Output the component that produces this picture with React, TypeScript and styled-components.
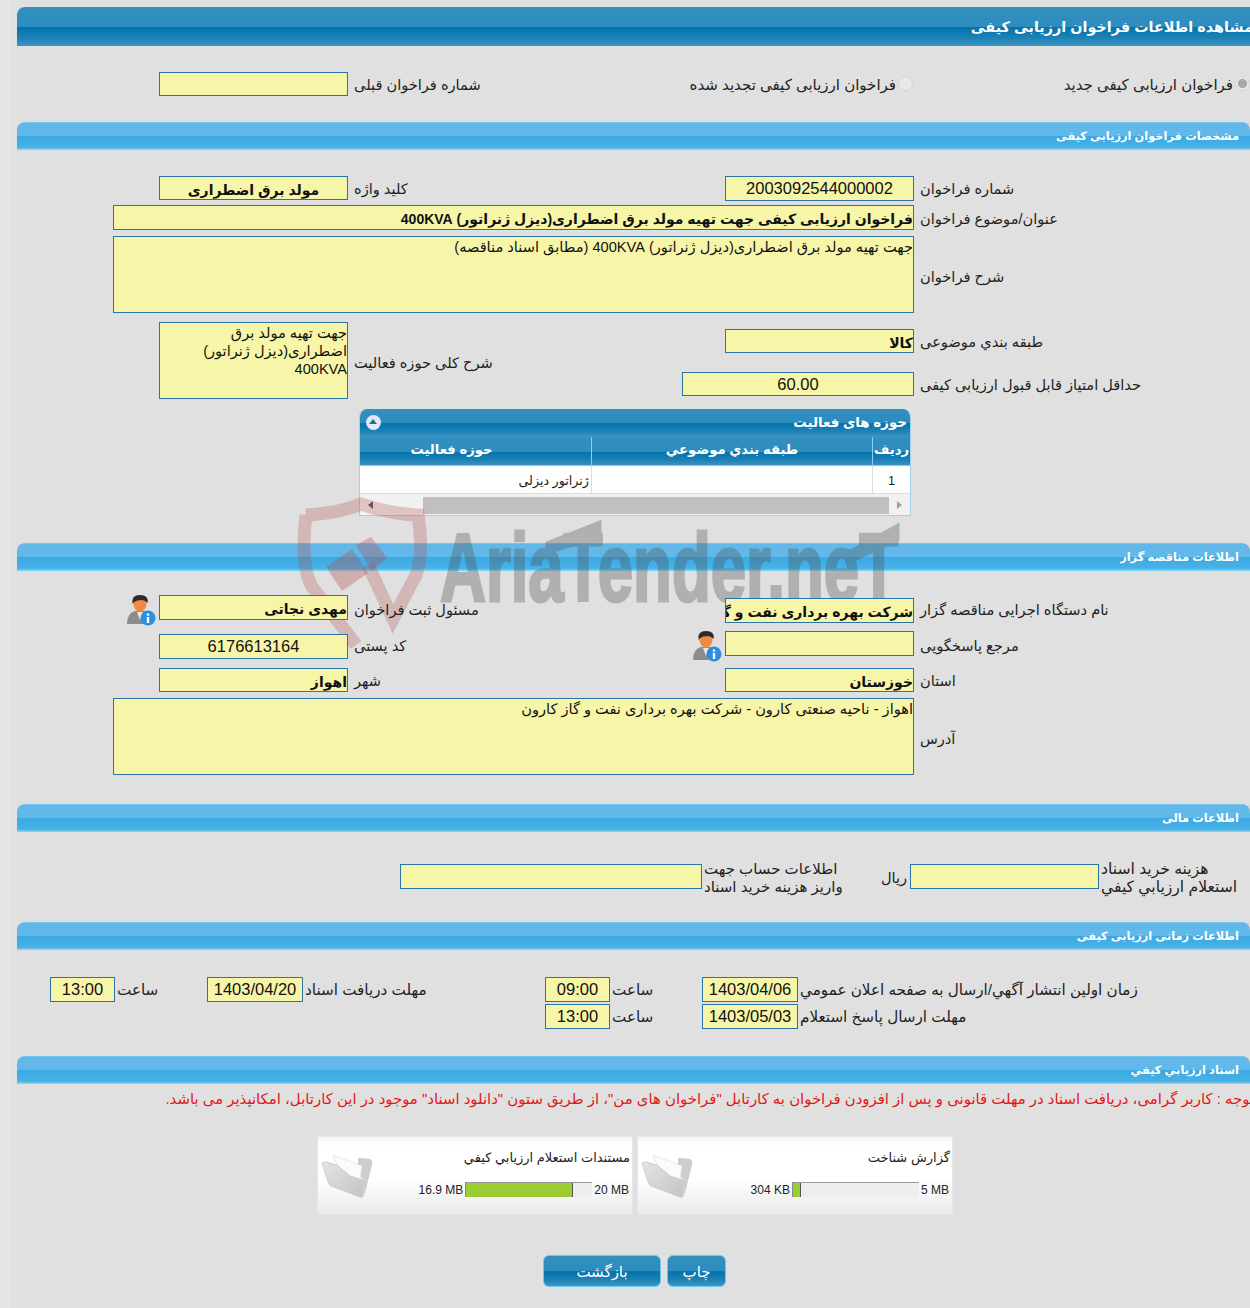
import React, { FC, ReactNode } from "react";
import styled, { createGlobalStyle, css } from "styled-components";

const GlobalStyle = createGlobalStyle`
  html, body {
    margin: 0;
    padding: 0;
    background: #e0e0e0;
  }
`;

const darkBar = css`
  background: linear-gradient(
    to bottom,
    #338fc0 0%,
    #2d8dbe 50%,
    #0273ae 52%,
    #1e82b5 80%,
    #3d97c6 100%
  );
`;

const lightBar = css`
  background: linear-gradient(
    to bottom,
    #7ccdf2 0,
    #62b9e9 5%,
    #62b9e9 48%,
    #3aa9e3 52%,
    #4ab2e6 92%,
    #7dd0f2 96%
  );
`;

const Page = styled.div`
  position: relative;
  width: 1250px;
  height: 1308px;
  overflow: hidden;
  box-sizing: border-box;
  padding-top: 7px;
  background: linear-gradient(to right, #e6e6e6 0, #e6e6e6 10px, #e0e0e0 11px);
  font-family: "Liberation Sans", "DejaVu Sans", sans-serif;
  font-size: 14.6px;
  color: #222;
`;

const MainHeader = styled.div`
  ${darkBar}
  height: 39px;
  margin-left: 17px;
  border-top-left-radius: 8px;
  overflow: hidden;
  display: flex;
  align-items: center;
  color: #fff;
  font-weight: bold;
  font-size: 14.4px;
  white-space: nowrap;
  box-sizing: border-box;
`;

const MainTitle = styled.span`
  flex: none;
  margin-right: -3px;
`;

const SectionBar = styled.div<{ $top: number }>`
  ${lightBar}
  height: 28px;
  margin: ${(p) => p.$top}px 0 0 17px;
  border-radius: 8px 8px 0 0;
  display: flex;
  align-items: center;
  padding-right: 11px;
  color: #fff;
  font-weight: bold;
  font-size: 11.4px;
  white-space: nowrap;
`;

const Row = styled.div<{ $top: number; $height: number }>`
  display: flex;
  margin-top: ${(p) => p.$top}px;
  height: ${(p) => p.$height}px;
`;

const Slot = styled.div<{ $width: number }>`
  width: ${(p) => p.$width}px;
  flex: none;
  display: flex;
  justify-content: flex-end;
  align-items: flex-start;
`;

const Field = styled.div<{
  $width: number;
  $height?: number;
  $center?: boolean;
  $bold?: boolean;
  $big?: boolean;
  $drop?: number;
}>`
  position: relative;
  z-index: 2;
  box-sizing: border-box;
  flex: none;
  width: ${(p) => p.$width}px;
  height: ${(p) => p.$height ?? 25}px;
  margin-top: ${(p) => p.$drop ?? 0}px;
  border: 1px solid #2a75a8;
  background: #f7f6a8;
  overflow: hidden;
  color: #111;
  text-align: ${(p) => (p.$center ? "center" : "right")};
  white-space: ${(p) => (p.$height && p.$height > 30 ? "normal" : "nowrap")};
  font-weight: ${(p) => (p.$bold ? "bold" : "normal")};
  font-size: ${(p) => (p.$big ? 16.5 : p.$bold ? 14 : 14.6)}px;
  line-height: ${(p) =>
    p.$height && p.$height > 30 ? "18px" : p.$big ? "23px" : "26px"};
  padding-top: ${(p) => (p.$height && p.$height > 30 ? 1 : 0)}px;
`;

const Label = styled.div<{ $width?: number; $pad?: number; $nudge?: number; $size?: number }>`
  position: relative;
  z-index: 2;
  flex: none;
  box-sizing: border-box;
  align-self: center;
  width: ${(p) => (p.$width ? `${p.$width}px` : "auto")};
  padding-left: ${(p) => p.$pad ?? 6}px;
  padding-top: ${(p) => p.$nudge ?? 2}px;
  font-size: ${(p) => p.$size ?? 14.6}px;
  text-align: left;
  white-space: nowrap;
  line-height: 18px;
`;

const RadioSlot = styled.div<{ $width: number }>`
  display: flex;
  justify-content: flex-end;
  flex: none;
  width: ${(p) => p.$width}px;
`;

const RadioItem = styled.label`
  display: flex;
  align-items: flex-start;
  flex: none;
  font-size: 15px;
  line-height: 26px;
  white-space: nowrap;
`;

const Radio = styled.span<{ $checked?: boolean }>`
  box-sizing: border-box;
  display: block;
  flex: none;
  width: 15px;
  height: 15px;
  margin: 4px 0 0 2px;
  border-radius: 50%;
  border: 1px solid #d4d4d4;
  background: ${(p) =>
    p.$checked
      ? "radial-gradient(circle, #a8a8a8 0, #a8a8a8 45%, #e8e8e8 55%)"
      : "#e8e8e8"};
`;

const StackColumn = styled.div`
  flex: none;
  width: 572px;
  display: flex;
  flex-direction: column;
  padding-top: 7px;
  gap: 19px;
`;

const StackLine = styled.div`
  display: flex;
`;

const IconRow = styled.div`
  display: flex;
  align-items: flex-start;
  flex: none;
  gap: 3px;
`;

const PersonFrame = styled.span`
  display: block;
  flex: none;
  margin-top: -1px;
  width: 30px;
  height: 32px;
`;

const Panel = styled.div`
  box-sizing: border-box;
  width: 552px;
  height: 107px;
  margin: 10px 0 0 359px;
  border: 1px solid #9fd0ec;
  border-top: 0;
  border-radius: 8px 8px 0 0;
  overflow: hidden;
  background: #fff;
`;

const PanelTitle = styled.div`
  ${darkBar}
  height: 28px;
  display: flex;
  align-items: center;
  justify-content: space-between;
  box-sizing: border-box;
  padding: 0 3px 2px 6px;
  color: #fff;
  font-weight: bold;
  font-size: 13.4px;
`;

const CollapseButton = styled.span`
  display: block;
  width: 15px;
  height: 15px;
  border-radius: 50%;
  background: #dfe9f7;
  position: relative;
  &::after {
    content: "";
    position: absolute;
    left: 3px;
    top: 4px;
    border: 4.5px solid transparent;
    border-top: 0;
    border-bottom: 5px solid #1b6f9f;
  }
`;

const GridRow = styled.div<{ $head?: boolean }>`
  display: grid;
  grid-template-columns: 231px 281px 1fr;
  height: ${(p) => (p.$head ? 29 : 28)}px;
  ${(p) => (p.$head ? darkBar : "background: #fff;")}
  color: ${(p) => (p.$head ? "#fff" : "#222")};
  font-weight: ${(p) => (p.$head ? "bold" : "normal")};
  font-size: ${(p) => (p.$head ? 13.2 : 12.7)}px;
`;

const GridCell = styled.div<{ $head?: boolean; $align?: string; $endPad?: number }>`
  border-left: 1px solid ${(p) => (p.$head ? "#8ad0f0" : "#dcdcdc")};
  border-bottom: 1px solid ${(p) => (p.$head ? "#7ac8ee" : "#dcdcdc")};
  &:first-child {
    border-left: 0;
  }
  display: flex;
  align-items: center;
  justify-content: ${(p) => p.$align ?? "center"};
  padding: ${(p) => (p.$head ? "0 0 3px" : "2px 0 0")};
  padding-right: ${(p) => p.$endPad ?? 2}px;
  padding-left: 2px;
  white-space: nowrap;
  overflow: hidden;
  box-sizing: border-box;
`;

const ScrollBar = styled.div`
  height: 21px;
  background: #f1f1f1;
  display: flex;
  align-items: center;
  padding-top: 1px;
  box-sizing: border-box;
`;

const ScrollArrow = styled.span<{ $dir: "left" | "right" }>`
  flex: none;
  width: 0;
  height: 0;
  margin: ${(p) => (p.$dir === "left" ? "0 50px 0 8px" : "0 0 0 8px")};
  border: 4px solid transparent;
  ${(p) =>
    p.$dir === "left"
      ? "border-left: 0; border-right: 5px solid #555;"
      : "border-right: 0; border-left: 5px solid #a0a0a0;"}
`;

const ScrollThumb = styled.span`
  flex: none;
  width: 466px;
  height: 17px;
  background: #c0c0c0;
`;

const Notice = styled.div`
  margin-top: 6px;
  height: 18px;
  line-height: 18px;
  display: flex;
  color: #e01818;
  font-size: 14.9px;
  white-space: nowrap;
`;

const NoticeText = styled.span`
  flex: none;
  margin-right: -4px;
`;

const Cards = styled.div`
  display: flex;
  gap: 4px;
  margin: 28px 0 0 317px;
`;

const Card = styled.div`
  box-sizing: border-box;
  width: 316px;
  height: 79px;
  background: linear-gradient(to bottom, #f6f6f6 0, #fff 12%, #fff 55%, #e9e9e9 100%);
  border: 1px solid #e6e6e6;
  display: flex;
  padding: 0 2px;
`;

const FolderFrame = styled.span`
  display: block;
  flex: none;
  margin-top: 16px;
  width: 54px;
  height: 48px;
`;

const CardBody = styled.div`
  flex: 1;
  display: flex;
  flex-direction: column;
  align-items: flex-end;
`;

const CardTitle = styled.div`
  margin-top: 12px;
  font-size: 13px;
  line-height: 18px;
  color: #222;
  white-space: nowrap;
`;

const Meter = styled.div`
  display: flex;
  align-items: center;
  margin-top: 15px;
  gap: 2px;
  font-size: 12px;
  color: #222;
  padding-right: 1px;
`;

const MeterTrack = styled.div`
  position: relative;
  width: 127px;
  height: 15px;
  box-sizing: border-box;
  background: #eeeeee;
  border-top: 1px solid #999;
`;

const MeterFill = styled.div<{ $width: number }>`
  height: 100%;
  box-sizing: border-box;
  width: ${(p) => p.$width}px;
  background: #9bcc32;
  border-left: 1px solid #888;
  border-right: 1px solid #555;
`;

const Buttons = styled.div`
  display: flex;
  gap: 6px;
  margin: 40px 0 0 543px;
`;

const ActionButton = styled.button<{ $width: number }>`
  ${darkBar}
  width: ${(p) => p.$width}px;
  height: 32px;
  box-sizing: border-box;
  border: 1px solid #6cc8ec;
  border-radius: 6px;
  color: #fff;
  font-family: inherit;
  font-size: 15px;
  padding: 1px 0 0;
`;

const WatermarkLayer = styled.svg`
  position: absolute;
  left: 290px;
  top: 495px;
  z-index: 1;
  pointer-events: none;
`;

const Watermark: FC = () => (
  <WatermarkLayer width="620" height="175" viewBox="0 0 620 175">
    <g fill="none" stroke="#b44a4a" strokeWidth="13" opacity="0.27">
      <path d="M16 20 Q50 18 71 9 Q100 19 128 20 Q134 60 126 80 L103 124 L78 70" />
      <path d="M16 20 Q10 70 22 92 L66 150" />
    </g>
    <g fill="#b44a4a" opacity="0.33">
      <polygon points="36,72 62,54 78,78 52,96" />
      <polygon points="66,50 81,42 97,63 82,76" />
    </g>
    <g fill="#505050" stroke="#505050" strokeWidth="3" opacity="0.33">
      <text
        x="150"
        y="106"
        fontFamily="Liberation Sans, sans-serif"
        fontWeight="bold"
        fontSize="96"
        textLength="458"
        lengthAdjust="spacingAndGlyphs"
      >
        AriaTender.neT
      </text>
      <polygon points="257,48 310,27 310,42 257,58" />
      <polygon points="557,58 608,30 608,45 557,68" />
    </g>
  </WatermarkLayer>
);

const PersonIcon: FC = () => (
  <PersonFrame>
    <svg width="30" height="32" viewBox="0 0 30 32">
      <path d="M1 30 Q1 19 9 17 L19 17 Q26 19 26 30 Z" fill="#8c8c8c" />
      <path d="M11 18 L14 26 L17 18 Z" fill="#e8e8e8" />
      <ellipse cx="14" cy="10" rx="6.5" ry="7.5" fill="#f08a3c" />
      <path d="M6.5 10 Q5 1 14 1 Q23 1 21.5 9 Q18 4.5 12 6.5 Q9 6.5 6.5 10 Z" fill="#2b2b2b" />
      <circle cx="22" cy="24" r="7.5" fill="#2a8fe0" />
      <rect x="20.8" y="23" width="2.4" height="6" fill="#fff" />
      <rect x="20.8" y="19.5" width="2.4" height="2.2" fill="#fff" />
    </svg>
  </PersonFrame>
);

const FolderIcon: FC<{ id: string }> = ({ id }) => (
  <FolderFrame>
    <svg width="54" height="48" viewBox="0 0 54 48">
      <defs>
        <linearGradient id={id} x1="0" y1="0" x2="1" y2="1">
          <stop offset="0" stopColor="#e4e4e4" />
          <stop offset="1" stopColor="#c4c4c4" />
        </linearGradient>
      </defs>
      <path d="M38 5 Q44 5 50 6 Q53 7 52 12 L44 44 L43 27 L38 20 Z" fill="#cdcdcd" />
      <path d="M13 2 L42 13 L40 27 L30 23 L17 12 Z" fill="#fbfbfb" stroke="#dcdcdc" strokeWidth="0.7" />
      <path
        d="M2 10 Q3 9 6 9 L17 12 Q24 18 30 23 L43 27 L43 43 Q43 45 40 44 L11 33 Q9 32 8 29 Z"
        fill={`url(#${id})`}
        stroke="#c8c8c8"
        strokeWidth="0.8"
      />
    </svg>
  </FolderFrame>
);

interface FileCardProps {
  id: string;
  title: string;
  used: string;
  limit: string;
  fill: number;
}

const FileCard: FC<FileCardProps> = ({ id, title, used, limit, fill }) => (
  <Card>
    <FolderIcon id={id} />
    <CardBody>
      <CardTitle dir="rtl">{title}</CardTitle>
      <Meter>
        <span>{used}</span>
        <MeterTrack>
          <MeterFill $width={fill} />
        </MeterTrack>
        <span>{limit}</span>
      </Meter>
    </CardBody>
  </Card>
);

interface TextProps {
  children: ReactNode;
}

const Rtl: FC<TextProps> = ({ children }) => <span dir="rtl">{children}</span>;

const App: FC = () => (
  <Page>
    <GlobalStyle />
    <Watermark />
    <MainHeader dir="rtl">
      <MainTitle>مشاهده اطلاعات فراخوان ارزیابی کیفی</MainTitle>
    </MainHeader>

    <Row $top={26} $height={24}>
      <Slot $width={348}>
        <Field $width={189} $height={24} />
      </Slot>
      <Label $width={340}><Rtl>شماره فراخوان قبلی</Rtl></Label>
      <RadioSlot $width={225}>
        <RadioItem>
          <Rtl>فراخوان ارزیابی کیفی تجدید شده</Rtl>
          <Radio />
        </RadioItem>
      </RadioSlot>
      <RadioSlot $width={337}>
        <RadioItem>
          <Rtl>فراخوان ارزیابی کیفی جدید</Rtl>
          <Radio $checked />
        </RadioItem>
      </RadioSlot>
    </Row>

    <SectionBar $top={26} dir="rtl">مشخصات فراخوان ارزیابی کیفی</SectionBar>

    <Row $top={26} $height={24}>
      <Slot $width={348}>
        <Field $width={189} $height={24} $center $bold>مولد برق اضطراری</Field>
      </Slot>
      <Label $width={377}><Rtl>کلید واژه</Rtl></Label>
      <Field $width={189} $center $big>2003092544000002</Field>
      <Label $nudge={1}><Rtl>شماره فراخوان</Rtl></Label>
    </Row>
    <Row $top={5} $height={25}>
      <Slot $width={914}>
        <Field $width={801} $bold dir="rtl">فراخوان ارزیابی کیفی جهت تهیه مولد برق اضطراری(دیزل ژنراتور) 400KVA</Field>
      </Slot>
      <Label $nudge={3}><Rtl>عنوان/موضوع فراخوان</Rtl></Label>
    </Row>
    <Row $top={6} $height={77}>
      <Slot $width={914}>
        <Field $width={801} $height={77} dir="rtl">جهت تهیه مولد برق اضطراری(دیزل ژنراتور) 400KVA (مطابق اسناد مناقصه)</Field>
      </Slot>
      <Label $nudge={5}><Rtl>شرح فراخوان</Rtl></Label>
    </Row>
    <Row $top={9} $height={77}>
      <Slot $width={348}>
        <Field $width={189} $height={77} dir="rtl">جهت تهیه مولد برق اضطراری(دیزل ژنراتور) 400KVA</Field>
      </Slot>
      <Label $width={334} $nudge={5}><Rtl>شرح کلی حوزه فعالیت</Rtl></Label>
      <StackColumn>
        <StackLine>
          <Slot $width={232}>
            <Field $width={189} $height={24} $bold dir="rtl">کالا</Field>
          </Slot>
          <Label><Rtl>طبقه بندي موضوعی</Rtl></Label>
        </StackLine>
        <StackLine>
          <Slot $width={232}>
            <Field $width={232} $height={24} $center $big>60.00</Field>
          </Slot>
          <Label><Rtl>حداقل امتیاز قابل قبول ارزیابی کیفی</Rtl></Label>
        </StackLine>
      </StackColumn>
    </Row>

    <Panel>
      <PanelTitle>
        <CollapseButton />
        <Rtl>حوزه های فعالیت</Rtl>
      </PanelTitle>
      <GridRow $head>
        <GridCell $head $endPad={50}>حوزه فعالیت</GridCell>
        <GridCell $head>طبقه بندي موضوعي</GridCell>
        <GridCell $head>ردیف</GridCell>
      </GridRow>
      <GridRow>
        <GridCell $align="flex-end">ژنراتور دیزلی</GridCell>
        <GridCell />
        <GridCell>1</GridCell>
      </GridRow>
      <ScrollBar>
        <ScrollArrow $dir="left" />
        <ScrollThumb />
        <ScrollArrow $dir="right" />
      </ScrollBar>
    </Panel>

    <SectionBar $top={27} dir="rtl">اطلاعات مناقصه گزار</SectionBar>

    <Row $top={24} $height={28}>
      <Slot $width={348}>
        <IconRow>
          <PersonIcon />
          <Field $width={189} $bold dir="rtl">مهدی نجاتی</Field>
        </IconRow>
      </Slot>
      <Label $width={377}><Rtl>مسئول ثبت فراخوان</Rtl></Label>
      <Field $width={189} $drop={3} $bold dir="rtl">شرکت بهره برداری نفت و گاز کارون</Field>
      <Label><Rtl>نام دستگاه اجرایی مناقصه گزار</Rtl></Label>
    </Row>
    <Row $top={8} $height={28}>
      <Slot $width={348}>
        <Field $width={189} $drop={3} $center $big>6176613164</Field>
      </Slot>
      <Label $width={344}><Rtl>کد پستی</Rtl></Label>
      <IconRow>
        <PersonIcon />
        <Field $width={189} />
      </IconRow>
      <Label><Rtl>مرجع پاسخگویی</Rtl></Label>
    </Row>
    <Row $top={9} $height={24}>
      <Slot $width={348}>
        <Field $width={189} $height={24} $bold dir="rtl">اهواز</Field>
      </Slot>
      <Label $width={377}><Rtl>شهر</Rtl></Label>
      <Field $width={189} $height={24} $bold dir="rtl">خوزستان</Field>
      <Label><Rtl>استان</Rtl></Label>
    </Row>
    <Row $top={6} $height={77}>
      <Slot $width={914}>
        <Field $width={801} $height={77} dir="rtl">اهواز - ناحیه صنعتی کارون - شرکت بهره برداری نفت و گاز کارون</Field>
      </Slot>
      <Label $nudge={5}><Rtl>آدرس</Rtl></Label>
    </Row>

    <SectionBar $top={29} dir="rtl">اطلاعات مالی</SectionBar>

    <Row $top={28} $height={36}>
      <Slot $width={702}>
        <Field $width={302} $drop={4} />
      </Slot>
      <Label $width={176} $pad={2} $nudge={0} $size={15}>
        <div dir="rtl">اطلاعات حساب جهت</div>
        <div dir="rtl">واریز هزینه خرید اسناد</div>
      </Label>
      <Label $width={32} $pad={3} $nudge={0}><Rtl>ریال</Rtl></Label>
      <Field $width={189} $drop={4} />
      <Label $pad={2} $nudge={0} $size={15.6}>
        <div dir="rtl">هزینه خرید اسناد</div>
        <div dir="rtl">استعلام ارزیابي کیفي</div>
      </Label>
    </Row>

    <SectionBar $top={26} dir="rtl">اطلاعات زمانی ارزیابی کیفی</SectionBar>

    <Row $top={27} $height={25}>
      <Slot $width={115}>
        <Field $width={65} $center $big>13:00</Field>
      </Slot>
      <Label $width={92} $pad={2} $nudge={1} $size={15.2}><Rtl>ساعت</Rtl></Label>
      <Field $width={96} $center $big>1403/04/20</Field>
      <Label $width={242} $pad={2} $nudge={1} $size={15.2}><Rtl>مهلت دریافت اسناد</Rtl></Label>
      <Field $width={65} $center $big>09:00</Field>
      <Label $width={92} $pad={2} $nudge={1} $size={15.2}><Rtl>ساعت</Rtl></Label>
      <Field $width={96} $center $big>1403/04/06</Field>
      <Label $pad={2} $nudge={1} $size={15.2}><Rtl>زمان اولین انتشار آگهي/ارسال به صفحه اعلان عمومي</Rtl></Label>
    </Row>
    <Row $top={2} $height={25}>
      <Slot $width={610}>
        <Field $width={65} $center $big>13:00</Field>
      </Slot>
      <Label $width={92} $pad={2} $nudge={1} $size={15.2}><Rtl>ساعت</Rtl></Label>
      <Field $width={96} $center $big>1403/05/03</Field>
      <Label $pad={2} $nudge={1} $size={15.2}><Rtl>مهلت ارسال پاسخ استعلام</Rtl></Label>
    </Row>

    <SectionBar $top={27} dir="rtl">اسناد ارزیابي کیفي</SectionBar>

    <Notice dir="rtl">
      <NoticeText>
        توجه : کاربر گرامی، دریافت اسناد در مهلت قانونی و پس از افزودن فراخوان به کارتابل "فراخوان های من"، از طریق ستون "دانلود اسناد" موجود در این کارتابل، امکانپذیر می باشد.
      </NoticeText>
    </Notice>

    <Cards>
      <FileCard id="folderOne" title="مستندات استعلام ارزیابي کیفي" used="16.9 MB" limit="20 MB" fill={108} />
      <FileCard id="folderTwo" title="گزارش شناخت" used="304 KB" limit="5 MB" fill={9} />
    </Cards>

    <Buttons>
      <ActionButton $width={118}>بازگشت</ActionButton>
      <ActionButton $width={59}>چاپ</ActionButton>
    </Buttons>
  </Page>
);

export default App;
